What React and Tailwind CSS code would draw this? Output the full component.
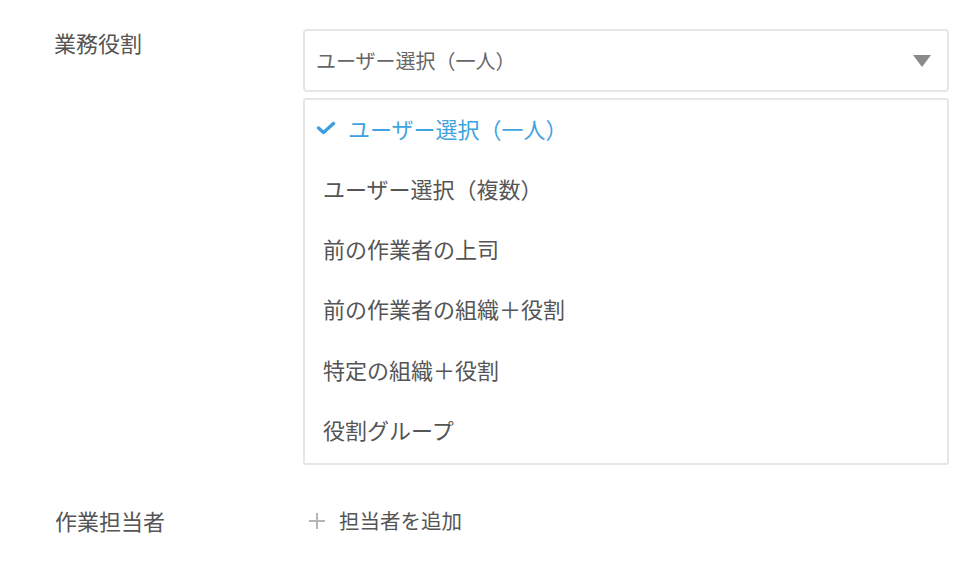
import React from "react";

const items = [
  "ユーザー選択（複数）",
  "前の作業者の上司",
  "前の作業者の組織＋役割",
  "特定の組織＋役割",
  "役割グループ",
];

export default function App() {
  return (
    <div
      className="w-[977px] h-[566px] bg-white text-[#555] overflow-hidden"
      style={{ fontFamily: '"Noto Sans CJK JP", "Noto Sans", sans-serif' }}
    >
      <div className="flex pt-[29px]">
        <div className="w-[303px] pl-[54px] text-[22px] leading-[26px] text-[#555]">業務役割</div>
        <div className="w-[646px] flex flex-col">
          <div className="h-[63px] border-2 border-[#e6e6e6] rounded-[4px] flex items-center justify-between pl-[11px] pr-[16px]">
            <span className="text-[20px] text-[#666]">ユーザー選択（一人）</span>
            <svg width="18" height="12" viewBox="0 0 18 12">
              <path d="M0 0 H18 L9 12 Z" fill="#8a8a8a" />
            </svg>
          </div>
          <div className="mt-[6px] h-[367px] border-2 border-[#e6e6e6] rounded-[3px] flex flex-col">
            <div className="h-[60px] pb-[4px] flex items-center pl-[11px] text-[22px] text-[#3fa3e0]">
              <svg width="20" height="14" viewBox="0 0 20 14" className="mr-[12px]">
                <path d="M2.5 7 L7.5 11.5 L17.5 2.5" fill="none" stroke="#3b9fe0" strokeWidth="3.4" strokeLinecap="round" strokeLinejoin="round" />
              </svg>
              <span>ユーザー選択（一人）</span>
            </div>
            {items.map((t) => (
              <div key={t} className="h-[60.4px] pb-[4px] flex items-center pl-[18px] text-[22px] text-[#555]">
                {t}
              </div>
            ))}
          </div>
        </div>
      </div>
      <div className="flex items-center mt-[39px]">
        <div className="w-[303px] pl-[55px] text-[22px] text-[#555]">作業担当者</div>
        <div className="flex items-center pl-[4px] text-[20.5px] text-[#555]">
          <svg width="20" height="20" viewBox="0 0 20 20" className="mr-[12px]">
            <path d="M10 2 V18 M2 10 H18" stroke="#b5b5b5" strokeWidth="2" />
          </svg>
          <span>担当者を追加</span>
        </div>
      </div>
    </div>
  );
}
